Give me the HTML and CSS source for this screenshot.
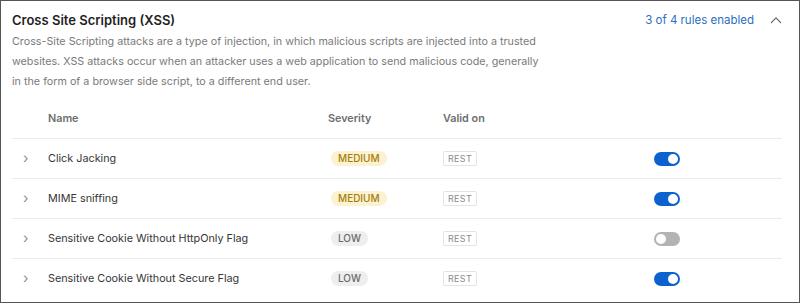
FILE: index.html
```html
<!DOCTYPE html>
<html lang="en">
<head>
  <meta charset="UTF-8">
  <title>Rules</title>
  <link rel="stylesheet" href="styles.css">
</head>
<body>
  <div class="panel">
    <div class="head">
      <div class="title-row">
        <h2 class="title">Cross Site Scripting (XSS)</h2>
        <div class="summary">
          <span class="count">3 of 4 rules enabled</span>
          <svg class="collapse" width="12" height="8" viewBox="0 0 12 8">
            <path d="M1 7 L6 1.8 L11 7" fill="none" stroke="#6b6b6b" stroke-width="1.1"/>
          </svg>
        </div>
      </div>
      <p class="desc">Cross-Site Scripting attacks are a type of injection, in which malicious scripts are injected into a trusted websites. XSS attacks occur when an attacker uses a web application to send malicious code, generally in the form of a browser side script, to a different end user.</p>
    </div>

    <table class="rules">
      <thead>
        <tr>
          <th class="c-exp"></th>
          <th class="c-name">Name</th>
          <th class="c-sev">Severity</th>
          <th class="c-valid">Valid on</th>
          <th class="c-tog"></th>
        </tr>
      </thead>
      <tbody>
        <tr>
          <td class="c-exp"><span class="expand">&#8250;</span></td>
          <td class="c-name">Click Jacking</td>
          <td class="c-sev"><span class="sev medium">MEDIUM</span></td>
          <td class="c-valid"><span class="tag">REST</span></td>
          <td class="c-tog"><span class="toggle on"></span></td>
        </tr>
        <tr>
          <td class="c-exp"><span class="expand">&#8250;</span></td>
          <td class="c-name">MIME sniffing</td>
          <td class="c-sev"><span class="sev medium">MEDIUM</span></td>
          <td class="c-valid"><span class="tag">REST</span></td>
          <td class="c-tog"><span class="toggle on"></span></td>
        </tr>
        <tr>
          <td class="c-exp"><span class="expand">&#8250;</span></td>
          <td class="c-name">Sensitive Cookie Without HttpOnly Flag</td>
          <td class="c-sev"><span class="sev low">LOW</span></td>
          <td class="c-valid"><span class="tag">REST</span></td>
          <td class="c-tog"><span class="toggle"></span></td>
        </tr>
        <tr>
          <td class="c-exp"><span class="expand">&#8250;</span></td>
          <td class="c-name">Sensitive Cookie Without Secure Flag</td>
          <td class="c-sev"><span class="sev low">LOW</span></td>
          <td class="c-valid"><span class="tag">REST</span></td>
          <td class="c-tog"><span class="toggle on"></span></td>
        </tr>
      </tbody>
    </table>
  </div>
</body>
</html>
```

FILE: styles.css
```css
body, h2, p {
  margin: 0;
  padding: 0;
}

body {
  font-family: Inter, "Liberation Sans", sans-serif;
  background: #fff;
}

.panel {
  box-sizing: border-box;
  width: 800px;
  height: 303px;
  border: 1px solid #555;
  padding: 9px 17px 3px 11px;
}

.title-row {
  display: flex;
  justify-content: space-between;
  align-items: center;
  height: 20px;
}
.title {
  font-size: 13px;
  font-weight: 600;
  color: #1f1f1f;
  line-height: 20px;
}
.summary {
  display: flex;
  align-items: center;
  gap: 16px;
}
.count {
  font-size: 11.5px;
  color: #2a6fc0;
}
.collapse {
  display: block;
}

.desc {
  margin-top: 2px;
  font-size: 10.75px;
  line-height: 20px;
  color: #7a7a7a;
  width: 530px;
}

.rules {
  margin-top: 6px;
  width: 100%;
  border-collapse: collapse;
  font-size: 10.8px;
  color: #363636;
}
.rules th {
  height: 40px;
  padding: 0;
  text-align: left;
  font-weight: 600;
  color: #6e6e6e;
}
.rules td {
  height: 39px;
  padding: 0;
  border-top: 1px solid #ebebeb;
}
.c-exp { width: 36px; }
.c-name { width: 280px; }
.c-sev { width: 115px; }
.c-valid { width: 211px; }

.expand {
  display: inline-block;
  margin-left: 11px;
  font-size: 14px;
  color: #8f8f8f;
  line-height: 1;
}

.sev {
  display: inline-block;
  margin-left: 3px;
  padding: 0 7px;
  height: 15px;
  line-height: 15px;
  border-radius: 8px;
  font-size: 10px;
  font-weight: 500;
}
.sev.medium {
  background: #fdf2cf;
  color: #a57c0c;
}
.sev.low {
  background: #eeeeee;
  color: #6b6b6b;
}

.tag {
  display: inline-block;
  padding: 0 4px;
  height: 13px;
  line-height: 13px;
  border: 1px solid #e4e4e4;
  border-radius: 2px;
  font-size: 9px;
  letter-spacing: 0.3px;
  color: #8a8a8a;
}

.toggle {
  display: block;
  position: relative;
  width: 26px;
  height: 14px;
  border-radius: 7px;
  background: #b3b3b3;
}
.toggle::after {
  content: "";
  position: absolute;
  top: 2px;
  left: 2px;
  width: 10px;
  height: 10px;
  border-radius: 50%;
  background: #fff;
}
.toggle.on {
  background: #0b62cf;
}
.toggle.on::after {
  left: 14px;
}
```
